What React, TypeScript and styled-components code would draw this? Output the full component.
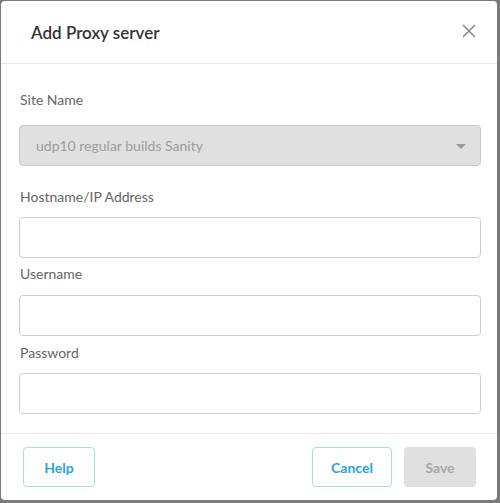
import styled, { createGlobalStyle } from 'styled-components';
import type { JSX } from 'react';

const GlobalStyle = createGlobalStyle`
  html, body {
    margin: 0;
    padding: 0;
    background: #7b7b7b;
    font-family: Lato, "Noto Sans", sans-serif;
  }
  * { box-sizing: border-box; }
`;

const CloseIcon = (): JSX.Element => (
  <svg width="14" height="14" viewBox="0 0 14 14">
    <path d="M1 1 L13 13 M13 1 L1 13" stroke="#8a8a8a" strokeWidth="1.6" fill="none" />
  </svg>
);

type FieldProps = { label: string; gap: number; top: number };

const Field = ({ label, gap, top, children }: FieldProps & { children: JSX.Element }): JSX.Element => (
  <FieldBlock $top={top}>
    <Label $gap={gap}>{label}</Label>
    {children}
  </FieldBlock>
);

export default function App(): JSX.Element {
  return (
    <>
      <GlobalStyle />
      <Screen>
        <Modal>
          <Header>
            <Title>Add Proxy server</Title>
            <CloseButton aria-label="Close">
              <CloseIcon />
            </CloseButton>
          </Header>

          <Body>
            <Field label="Site Name" gap={15} top={0}>
              <Select>
                <span>udp10 regular builds Sanity</span>
                <Caret />
              </Select>
            </Field>
            <Field label="Hostname/IP Address" gap={10} top={21}>
              <Input type="text" />
            </Field>
            <Field label="Username" gap={11} top={6}>
              <Input type="text" />
            </Field>
            <Field label="Password" gap={10} top={7}>
              <Input type="password" />
            </Field>
          </Body>

          <Footer>
            <OutlineButton $width={72}>Help</OutlineButton>
            <Actions>
              <OutlineButton $width={80}>Cancel</OutlineButton>
              <DisabledButton disabled>Save</DisabledButton>
            </Actions>
          </Footer>
        </Modal>
      </Screen>
    </>
  );
}

const Screen = styled.div`
  width: 500px;
  height: 503px;
  padding: 1px 3px 3px 1px;
`;

const Modal = styled.div`
  width: 496px;
  height: 499px;
  background: #ffffff;
  border-radius: 4px;
  display: flex;
  flex-direction: column;
`;

const Header = styled.div`
  height: 63px;
  padding: 0 21px 0 30px;
  display: flex;
  align-items: center;
  justify-content: space-between;
  border-bottom: 1px solid #e6e6e6;
`;

const Title = styled.h2`
  margin: 0;
  font-size: 17px;
  font-weight: 600;
  color: #333333;
`;

const CloseButton = styled.button`
  border: none;
  background: none;
  padding: 0;
  display: flex;
  align-items: center;
  cursor: pointer;
  margin-top: -2px;
`;

const Body = styled.div`
  flex: 1;
  padding: 26px 16px 0 18px;
  display: flex;
  flex-direction: column;
`;

const FieldBlock = styled.div<{ $top: number }>`
  margin-top: ${(p): string => `${p.$top}px`};
  display: flex;
  flex-direction: column;
`;

const Label = styled.label<{ $gap: number }>`
  font-size: 14px;
  line-height: 20px;
  color: #666666;
  padding-left: 1px;
  margin-bottom: ${(p): string => `${p.$gap}px`};
`;

const Select = styled.div`
  height: 41px;
  border: 1px solid #c9c9c9;
  border-radius: 4px;
  background: #e0e0e0;
  display: flex;
  align-items: center;
  justify-content: space-between;
  padding: 0 14px 0 16px;
  font-size: 14px;
  color: #9d9d9d;
`;

const Caret = styled.span`
  width: 0;
  height: 0;
  border-left: 5px solid transparent;
  border-right: 5px solid transparent;
  border-top: 5px solid #9a9a9a;
  margin-top: 2px;
`;

const Input = styled.input`
  height: 41px;
  width: 100%;
  border: 1px solid #cfcfcf;
  border-radius: 4px;
  background: #ffffff;
  padding: 0 16px;
  font-family: inherit;
  font-size: 14px;
  outline: none;
`;

const Footer = styled.div`
  height: 67px;
  border-top: 1px solid #e6e6e6;
  padding: 0 21px 0 22px;
  display: flex;
  align-items: center;
  justify-content: space-between;
`;

const Actions = styled.div`
  display: flex;
  gap: 12px;
`;

const OutlineButton = styled.button<{ $width: number }>`
  width: ${(p): string => `${p.$width}px`};
  height: 40px;
  border: 1px solid #a3def2;
  border-radius: 4px;
  background: #ffffff;
  color: #1ea7d9;
  font-family: inherit;
  font-size: 14px;
  font-weight: 700;
  cursor: pointer;
`;

const DisabledButton = styled.button`
  width: 72px;
  height: 40px;
  border: none;
  border-radius: 4px;
  background: #e0e0e0;
  color: #a8a8a8;
  font-family: inherit;
  font-size: 14px;
  font-weight: 700;
`;
